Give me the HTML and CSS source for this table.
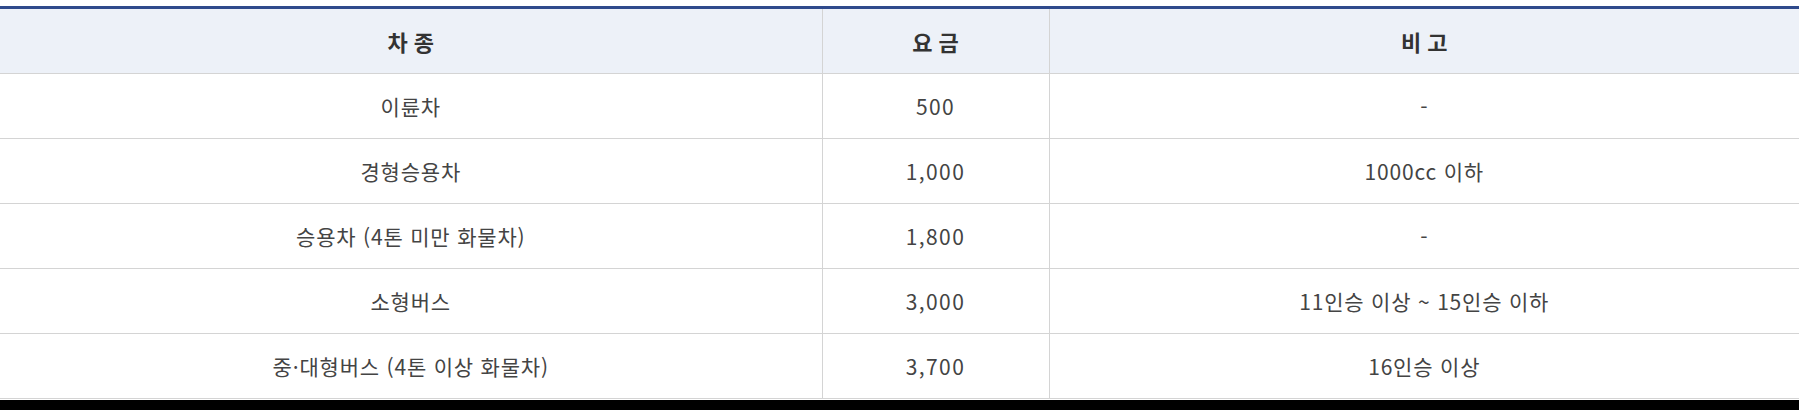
FILE: index.html
```html
<!DOCTYPE html>
<html lang="ko">
<head>
<meta charset="utf-8">
<title>차종별 요금</title>
<link rel="stylesheet" href="styles.css">
</head>
<body>
<div class="wrap">
  <table class="fare">
    <colgroup>
      <col class="c1">
      <col class="c2">
      <col class="c3">
    </colgroup>
    <thead>
      <tr><th>차 종</th><th>요 금</th><th>비 고</th></tr>
    </thead>
    <tbody>
      <tr><td>이륜차</td><td class="num">500</td><td>-</td></tr>
      <tr><td>경형승용차</td><td class="num">1,000</td><td>1000cc 이하</td></tr>
      <tr><td>승용차 (4톤 미만 화물차)</td><td class="num">1,800</td><td>-</td></tr>
      <tr><td>소형버스</td><td class="num">3,000</td><td>11인승 이상 ~ 15인승 이하</td></tr>
      <tr><td>중·대형버스 (4톤 이상 화물차)</td><td class="num">3,700</td><td>16인승 이상</td></tr>
    </tbody>
  </table>
  <div class="foot"></div>
</div>
</body>
</html>
```
FILE: styles.css
```css
html, body {
  margin: 0;
  padding: 0;
  background: #fff;
}
body {
  font-family: "Noto Sans CJK KR", "Noto Sans", sans-serif;
}
.wrap {
  width: 1799px;
  padding-top: 6px;
}
.fare {
  width: 1799px;
  border-collapse: collapse;
  table-layout: fixed;
  border-top: 3px solid #2f4a8c;
}
.fare .c1 { width: 822px; }
.fare .c2 { width: 227px; }
.fare .c3 { width: 750px; }
.fare thead th {
  background: #edf1f8;
  border-top: 1px solid #111;
  height: 64px;
  padding: 0;
  font-size: 22px;
  font-weight: 700;
  color: #333;
  text-align: center;
  border-bottom: 1px solid #d4d4d4;
}
.fare td {
  height: 64px;
  padding: 0;
  font-size: 21px;
  color: #444;
  text-align: center;
  border-bottom: 1px solid #d4d4d4;
  letter-spacing: 0.8px;
}
.fare td.num {
  letter-spacing: 1.4px;
}
.fare th + th,
.fare td + td {
  border-left: 1px solid #d4d4d4;
}
.foot {
  margin-top: 1px;
  height: 10px;
  background: #000;
}
```
